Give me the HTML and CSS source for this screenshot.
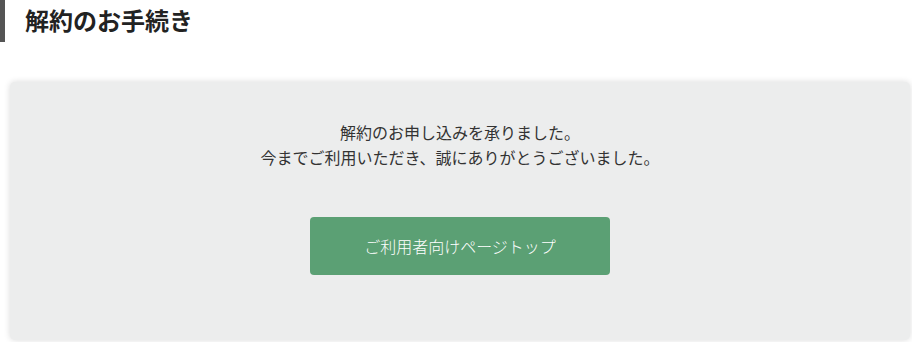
FILE: index.html
```html
<!DOCTYPE html>
<html lang="ja">
<head>
<meta charset="utf-8">
<link rel="stylesheet" href="styles.css">
</head>
<body>
<h1 class="page-title">解約のお手続き</h1>
<section class="card">
  <p class="message">解約のお申し込みを承りました。<br>今までご利用いただき、誠にありがとうございました。</p>
  <a class="btn" href="#">ご利用者向けページトップ</a>
</section>
</body>
</html>
```
FILE: styles.css
```css
* { box-sizing: border-box; }
body {
  margin: 0;
  background: #fff;
  font-family: "Noto Sans CJK JP", "Noto Sans", sans-serif;
  color: #333;
}
.page-title {
  margin: 0;
  height: 42px;
  border-left: 5px solid #555;
  padding: 4px 0 0 20px;
  font-size: 24px;
  line-height: 32px;
  font-weight: 700;
  color: #222;
}
.card {
  margin: 40px 2px 2px 10px;
  background: #eceded;
  border-radius: 5px;
  box-shadow: 0 0 6px rgba(0,0,0,0.15);
  padding: 38px 20px 65px;
  display: flex;
  flex-direction: column;
  align-items: center;
}
.message {
  margin: 0;
  font-size: 16px;
  line-height: 25px;
  text-align: center;
  color: #333;
}
.btn {
  margin-top: 47px;
  width: 300px;
  height: 58px;
  display: flex;
  align-items: center;
  justify-content: center;
  background: #5ba074;
  color: #fff;
  text-decoration: none;
  font-size: 16px;
  font-weight: 300;
  border-radius: 4px;
}
```
